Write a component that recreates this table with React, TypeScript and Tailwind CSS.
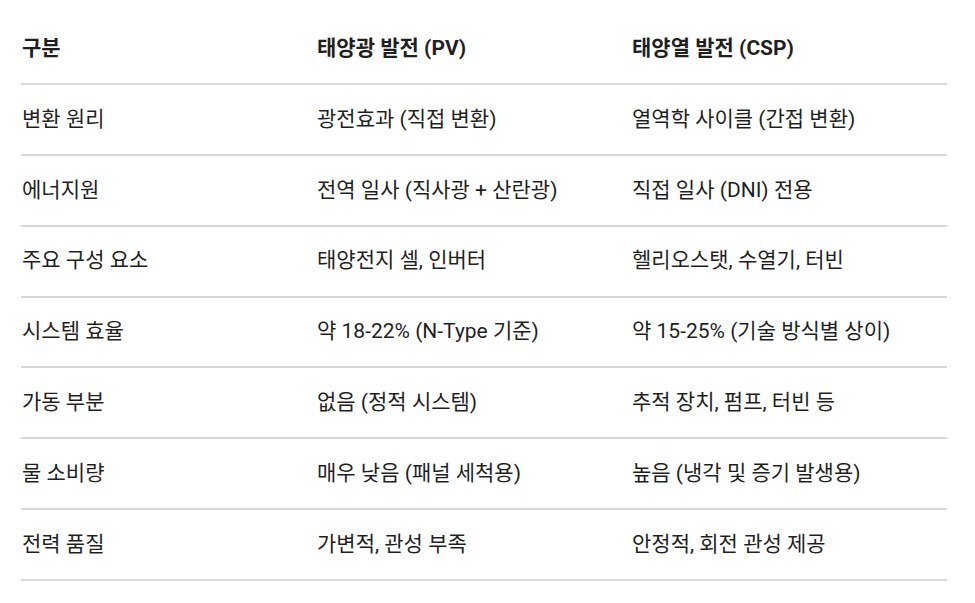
const header = ["구분", "태양광 발전 (PV)", "태양열 발전 (CSP)"];

const rows = [
  ["변환 원리", "광전효과 (직접 변환)", "열역학 사이클 (간접 변환)"],
  ["에너지원", "전역 일사 (직사광 + 산란광)", "직접 일사 (DNI) 전용"],
  ["주요 구성 요소", "태양전지 셀, 인버터", "헬리오스탯, 수열기, 터빈"],
  ["시스템 효율", "약 18-22% (N-Type 기준)", "약 15-25% (기술 방식별 상이)"],
  ["가동 부분", "없음 (정적 시스템)", "추적 장치, 펌프, 터빈 등"],
  ["물 소비량", "매우 낮음 (패널 세척용)", "높음 (냉각 및 증기 발생용)"],
  ["전력 품질", "가변적, 관성 부족", "안정적, 회전 관성 제공"],
];

const cols = "grid grid-cols-[295px_315px_316px] items-center";

export default function App() {
  return (
    <div className="min-h-screen bg-white pt-[14px] pl-[21px] font-['Roboto','Noto_Sans_CJK_KR',sans-serif] text-[21px] text-[#1f1f1f]">
      <div className="w-[926px]">
        <div className={`${cols} h-[71px] border-b-2 border-[#d6d6d6] font-bold`}>
          {header.map((h) => (
            <div key={h} className="pl-px">
              {h}
            </div>
          ))}
        </div>
        {rows.map((r) => (
          <div key={r[0]} className={`${cols} h-[70.86px] border-b-2 border-[#d6d6d6]`}>
            {r.map((c) => (
              <div key={c} className="pl-px">
                {c}
              </div>
            ))}
          </div>
        ))}
      </div>
    </div>
  );
}
